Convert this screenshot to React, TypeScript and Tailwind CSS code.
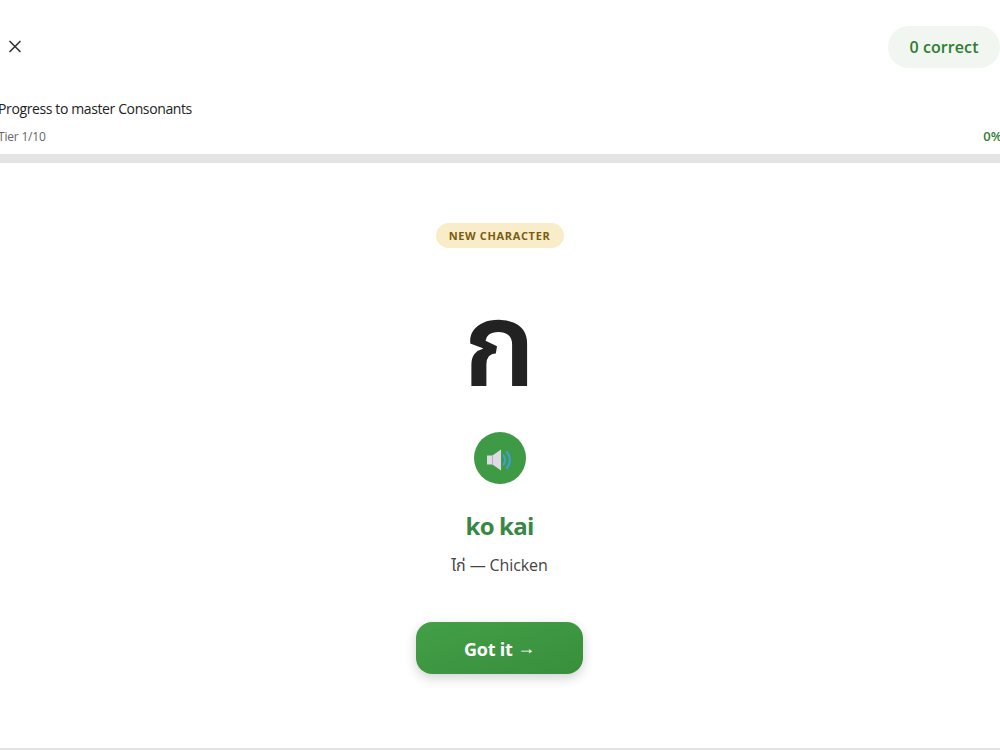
import React from 'react';
import { X } from 'lucide-react';

// Speaker drawn to match the emoji glyph in the round audio button
const SpeakerIcon = () => (
  <svg width="28" height="24" viewBox="0 0 28 24" fill="none" className="mt-[3px]">
    <path d="M1 7.500h5.500L15 1.500v21l-8.500-6H1z" fill="#dedbe4" />
    <path d="M6.500 7.500v9" stroke="#b4b1be" strokeWidth="1" />
    <path d="M17.500 7.500c2 2.800 2 6.200 0 9" stroke="#3f9fdc" strokeWidth="2" strokeLinecap="round" />
    <path d="M21 4c3.800 4.600 3.800 11.400 0 16" stroke="#3f9fdc" strokeWidth="2" strokeLinecap="round" />
  </svg>
);

export default function App() {
  return (
    <div
      className="h-[750px] w-[1000px] overflow-hidden bg-white flex flex-col"
      style={{ fontFamily: '"Open Sans", "Noto Sans", "Noto Sans Thai", "Noto Sans CJK SC", sans-serif' }}
    >
      {/* Top bar */}
      <div className="h-[92px] shrink-0 flex items-start justify-between pt-[26px] pl-[5px]">
        <button className="w-5 h-5 mt-[10px] flex items-center justify-center text-[#333]">
          <X size={21} strokeWidth={2} />
        </button>
        <div className="w-[112px] h-[42px] rounded-full bg-[#f1f6f1] flex items-center justify-center text-[16px] font-semibold tracking-[0.1px] text-[#2e7d32]">
          0 correct
        </div>
      </div>

      {/* Progress */}
      <div className="shrink-0 -mx-[2px]">
        <div className="h-[34px] text-[14px] leading-[34px] tracking-[-0.38px] text-[#222]">Progress to master Consonants</div>
        <div className="h-[28px] flex items-start justify-between text-[12px] leading-[22px] text-[#666]">
          <span className="tracking-[-0.2px]">Tier 1/10</span>
          <span className="text-[13px] leading-[21px] font-semibold text-[#2e7d32]">0%</span>
        </div>
      </div>
      <div className="h-[9px] shrink-0 bg-[#e4e4e4]" />

      {/* Card body */}
      <div className="flex-1 flex flex-col items-center pt-[60px] pr-[1px]">
        <div className="w-[128px] h-[25px] pt-[1px] rounded-full bg-[#f9ecc8] flex items-center justify-center text-[11px] font-bold tracking-[0.65px] text-[#7a5c10]">
          NEW CHARACTER
        </div>
        <div className="h-[160px] mt-[24px] flex items-end justify-center pb-[32px] text-[118px] leading-none font-semibold text-[#222]">ก</div>
        <button className="w-[52px] h-[52px] rounded-full bg-[#3f9a45] flex items-center justify-center">
          <SpeakerIcon />
        </button>
        <div className="mt-[25px] text-[24px] leading-[34px] font-bold tracking-[-0.8px] text-[#388745]">ko kai</div>
        <div className="mt-[10px] text-[16px] leading-[24px] tracking-[-0.1px] text-[#444]">ไก่ — Chicken</div>
        <button className="mt-[45px] w-[167px] h-[52px] pt-[3px] rounded-[16px] bg-gradient-to-br from-[#43a047] to-[#388e3c] text-white text-[18px] font-bold tracking-[-0.2px] shadow-[0_4px_12px_rgba(0,0,0,0.18)]">
          Got it <span className="inline-block -translate-y-[2px]" style={{ fontFamily: '"Liberation Sans", sans-serif' }}>→</span>
        </button>
      </div>

      <div className="h-[2px] shrink-0 bg-[#e2e2e2]" />
    </div>
  );
}
